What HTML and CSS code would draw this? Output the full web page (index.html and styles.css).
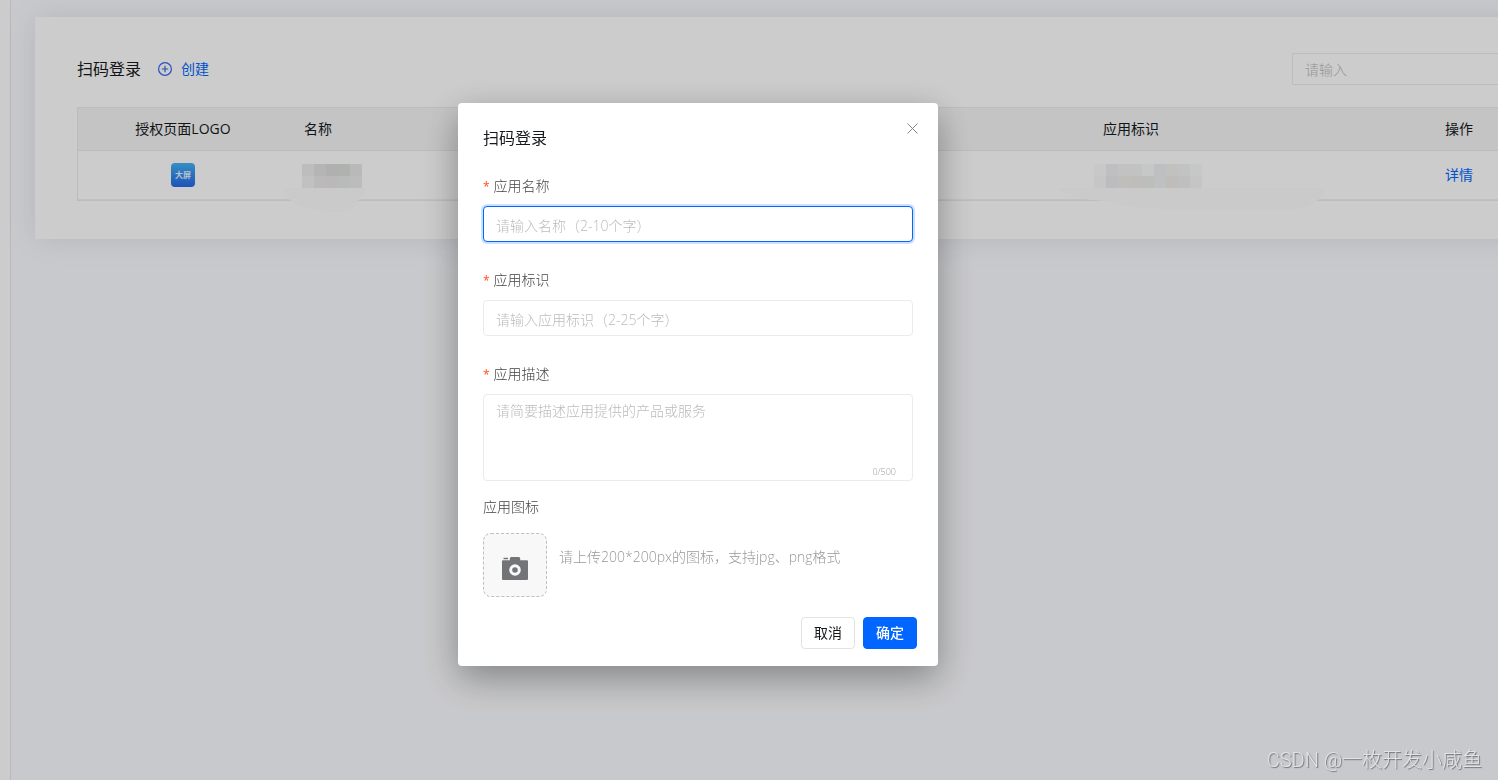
FILE: index.html
```html
<!DOCTYPE html>
<html lang="zh-CN">
<head>
<meta charset="utf-8">
<title>扫码登录</title>
<link rel="stylesheet" href="styles.css">
</head>
<body>
<div class="app">
  <aside class="sidebar"></aside>
  <main class="main">
    <section class="card">
      <header class="card-head">
        <h1 class="card-title">扫码登录</h1>
        <button class="create" type="button">
          <svg class="create-icon" viewBox="0 0 14 14" aria-hidden="true"><circle cx="7" cy="7" r="6.4"/><path d="M7 3.8v6.4M3.8 7h6.4"/></svg>
          创建
        </button>
        <input class="search" type="text" placeholder="请输入" aria-label="搜索">
      </header>
      <table class="table">
        <colgroup><col class="col-logo"><col><col class="col-key"><col class="col-action"></colgroup>
        <thead>
          <tr><th class="center">授权页面LOGO</th><th>名称</th><th>应用标识</th><th>操作</th></tr>
        </thead>
        <tbody>
          <tr>
            <td class="center"><span class="logo">大屏</span></td>
            <td>
              <svg class="mask mask-name" viewBox="0 0 86 48" aria-hidden="true">
                <path fill="#fdfdfd" d="M0 24h86q-6 4-9 10-6 13-17 14H42Q14 44 6 35 3 27 0 24z"/>
                <path fill="#ededed" d="M19 0h12v12H19z"/><path fill="#e3e3e3" d="M31 0h12v12H31z"/><path fill="#dcdcdc" d="M43 0h12v12H43z"/><path fill="#dddfdb" d="M55 0h12v12H55z"/><path fill="#e6e8e7" d="M67 0h12v12H67z"/>
                <path fill="#f2f2f2" d="M19 12h12v12H19z"/><path fill="#e9e9e9" d="M31 12h12v12H31z"/><path fill="#e9e6e7" d="M43 12h12v12H43z"/><path fill="#e7eae9" d="M55 12h12v12H55z"/><path fill="#ebebeb" d="M67 12h12v12H67z"/>
              </svg>
            </td>
            <td>
              <svg class="mask mask-key" viewBox="0 0 270 46" aria-hidden="true">
                <path fill="#fdfdfd" d="M0 24h268q-2 8-8 13-9 7-20 8H120Q78 46 50 37 14 36 0 24z"/>
                <path fill="#fafafa" d="M37 0h12v12H37z"/><path fill="#efeff2" d="M49 0h12v12H49z"/><path fill="#f3f3f3" d="M61 0h24v12H61z"/><path fill="#f8faf9" d="M85 0h12v12H85z"/><path fill="#eeeff1" d="M97 0h12v12H97z"/><path fill="#f2f2ee" d="M109 0h12v12h-12z"/><path fill="#f1f4f2" d="M121 0h12v12h-12z"/><path fill="#f8fbf9" d="M133 0h12v12h-12z"/>
                <path fill="#f8f8f8" d="M37 12h12v12H37z"/><path fill="#ebebee" d="M49 12h12v12H49z"/><path fill="#efeeea" d="M61 12h12v12H61z"/><path fill="#efedec" d="M73 12h12v12H73z"/><path fill="#ebeeec" d="M85 12h12v12H85z"/><path fill="#eef0f2" d="M97 12h12v12H97z"/><path fill="#efebe8" d="M109 12h12v12h-12z"/><path fill="#eef1f0" d="M121 12h12v12h-12z"/><path fill="#f5f7f6" d="M133 12h12v12h-12z"/>
              </svg>
            </td>
            <td><a class="link" href="#detail">详情</a></td>
          </tr>
        </tbody>
      </table>
    </section>
  </main>
</div>

<div class="overlay">
  <form class="dialog" role="dialog" aria-modal="true" aria-labelledby="dialog-title">
    <button class="close" type="button" aria-label="关闭"><svg viewBox="0 0 11 11" aria-hidden="true"><path d="M.5.5l10 10M10.5.5l-10 10"/></svg></button>
    <h2 class="dialog-title" id="dialog-title">扫码登录</h2>
    <div class="field">
      <label class="label required" for="app-name">应用名称</label>
      <input class="control focused" id="app-name" type="text" placeholder="请输入名称（2-10个字）">
    </div>
    <div class="field">
      <label class="label required" for="app-key">应用标识</label>
      <input class="control" id="app-key" type="text" placeholder="请输入应用标识（2-25个字）">
    </div>
    <div class="field field-last">
      <label class="label required" for="app-desc">应用描述</label>
      <div class="area">
        <textarea class="control control-area" id="app-desc" placeholder="请简要描述应用提供的产品或服务"></textarea>
        <span class="count">0/500</span>
      </div>
    </div>
    <div class="label" id="icon-label">应用图标</div>
    <div class="upload-row">
      <button class="upload" type="button" aria-labelledby="icon-label">
        <svg class="camera" viewBox="0 0 26 23" aria-hidden="true"><path fill-rule="evenodd" d="M1.500 .8h4.500v1.400h-4.500zM7.800 3.200V1.500Q7.800 0 9.300 0h7.400q1.500 0 1.500 1.500v1.700H25q1 0 1 1V22q0 1-1 1H1q-1 0-1-1V4.200q0-1 1-1zM13 7.200a5.800 5.800 0 1 0 0 11.600 5.800 5.800 0 1 0 0-11.600zM13 10.200a2.800 2.800 0 1 1 0 5.600 2.800 2.800 0 1 1 0-5.600z"/></svg>
      </button>
      <p class="hint">请上传200*200px的图标，支持jpg、png格式</p>
    </div>
    <footer class="actions">
      <button class="btn" type="button">取消</button>
      <button class="btn btn-primary" type="submit">确定</button>
    </footer>
  </form>
</div>
<div class="watermark">CSDN @一枚开发小咸鱼</div>
</body>
</html>
```
FILE: styles.css
```css
* { box-sizing: border-box; }

body {
  margin: 0;
  font: 300 14px/22px "Open Sans", "Noto Sans CJK SC", sans-serif;
  color: #17191c;
  background: #fbfcff;
}

button, input, textarea { font: inherit; color: inherit; }
button { padding: 0; border: 0; background: none; cursor: pointer; }
h1, h2, p { margin: 0; font-weight: inherit; }

.app { display: flex; min-height: 100vh; overflow: hidden; }
.sidebar { flex: none; width: 11px; background: #fff; border-right: 1px solid #e6e6e8; }
.main { flex: 1; min-width: 0; padding: 17px 0 0 24px; }

.card {
  margin-right: -42px;
  padding: 36px 42px 38px;
  background: #fff;
  box-shadow: 0 0 28px rgba(40, 60, 110, 0.12);
}
.card-head { display: flex; align-items: center; margin-bottom: 22px; }
.card-title { font-size: 16px; font-weight: 400; }
.create { display: flex; align-items: center; gap: 9px; margin-left: 17px; color: #0066ff; font-weight: 400; }
.create-icon { width: 14px; height: 14px; fill: none; stroke: #3366ee; stroke-width: 1.2; }
.search {
  width: 206px;
  height: 32px;
  margin-left: auto;
  padding: 1px 12px 0;
  border: 1px solid #ebebeb;
  border-right: 0;
  border-radius: 2px 0 0 2px;
  background: none;
}
::placeholder { color: #bbb; opacity: 1; }

.table {
  width: 100%;
  table-layout: fixed;
  border-spacing: 0;
  border: 1px solid #ebebeb;
  border-right: 0;
}
.col-logo { width: 210px; }
.col-key { width: 342px; }
.col-action { width: 69px; }
th, td { padding: 0 16px; text-align: left; white-space: nowrap; }
th { height: 43px; background: #f6f6f6; border-bottom: 1px solid #ebebeb; font-weight: 400; }
td { position: relative; height: 49px; border-bottom: 1px solid #f2f2f2; }
.center { text-align: center; }
.logo {
  display: inline-block;
  width: 24px;
  height: 24px;
  border-radius: 4px;
  background: linear-gradient(#45b2f5, #2567e8);
  color: #e8f4ff;
  font-size: 8px;
  font-weight: 700;
  line-height: 23px;
  vertical-align: middle;
}
.link { color: #0066ff; font-weight: 400; text-decoration: none; }
.mask { position: absolute; top: 13px; }
.mask-name { left: -5px; width: 86px; height: 48px; }
.mask-key { left: -30px; width: 270px; height: 46px; }

.overlay {
  position: fixed;
  inset: 0;
  display: flex;
  justify-content: center;
  align-items: flex-start;
  padding: 103px 102px 0 0;
  background: rgba(0, 0, 0, 0.2);
}
.dialog {
  position: relative;
  width: 480px;
  padding: 23px 25px 17px;
  border-radius: 4px;
  background: #fff;
  box-shadow: 0 12px 36px rgba(0, 0, 0, 0.35);
}
.dialog-title { margin-bottom: 25px; font-size: 16px; font-weight: 400; line-height: 24px; }
.close { position: absolute; top: 20px; right: 20px; display: flex; }
.close svg { width: 11px; height: 11px; fill: none; stroke: #888; stroke-width: 1; }

.field { margin-bottom: 27px; }
.field-last { margin-bottom: 15px; }
.label { display: block; color: #444; }
.required::before { content: "*"; margin-right: 4px; color: #ff4d1a; font-size: 12px; font-weight: 400; line-height: 1; }
.control {
  display: block;
  width: 100%;
  height: 36px;
  margin-top: 9px;
  padding: 3px 12px 0;
  border: 1px solid #ebebeb;
  border-radius: 4px;
  outline: 0;
  background: #fff;
}
.focused { border-color: #0066ff; box-shadow: 0 0 0 2px rgba(0, 102, 255, 0.2); }
.area { position: relative; }
.control-area { height: 87px; padding-top: 5px; resize: none; }
.count { position: absolute; right: 17px; bottom: 2px; color: #999; font-size: 9px; line-height: 14px; }

.upload-row { display: flex; gap: 12px; margin: 15px 0 20px; }
.upload {
  display: grid;
  place-items: center;
  width: 64px;
  height: 64px;
  padding-top: 7px;
  border: 1px dashed #bfbfbf;
  border-radius: 8px;
  background: #f8f8f8;
}
.camera { width: 26px; height: 23px; fill: #737477; }
.hint { padding-top: 13px; color: #999; }

.actions { display: flex; justify-content: flex-end; gap: 8px; margin-right: -4px; }
.btn { width: 54px; height: 32px; border: 1px solid #e2e2e2; border-radius: 4px; background: #fff; font-weight: 400; }
.btn-primary { border-color: #0066ff; background: #0066ff; color: #fff; font-weight: 500; }

.watermark {
  position: fixed;
  right: 16px;
  bottom: 6px;
  color: #e2e3e5;
  font-family: Roboto, "Noto Sans CJK SC", sans-serif;
  font-size: 20px;
  line-height: 28px;
  text-shadow: 1px 1px 1px #707276;
}
```
